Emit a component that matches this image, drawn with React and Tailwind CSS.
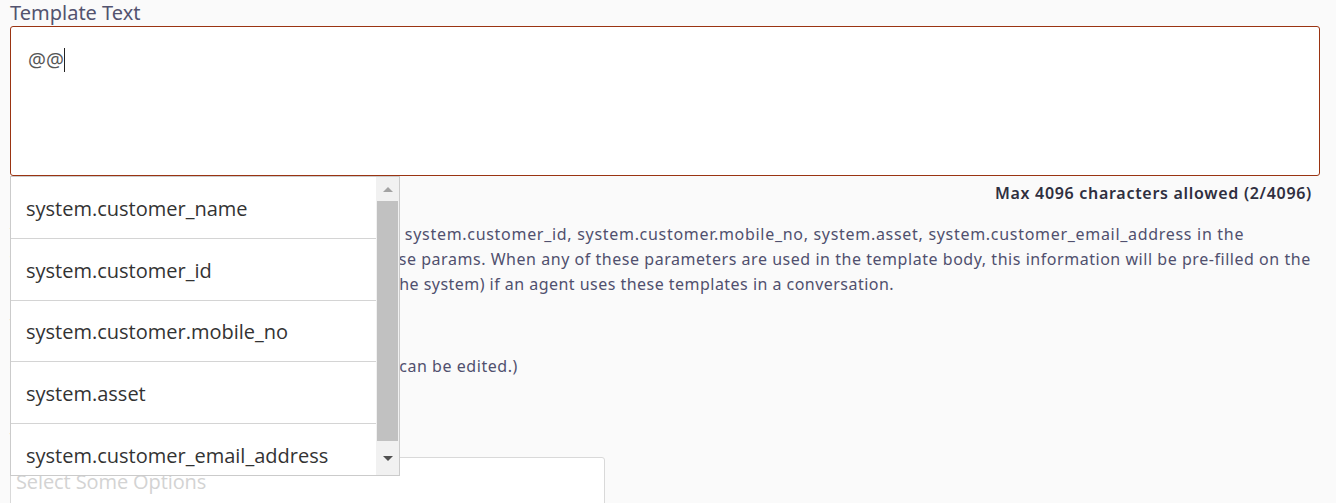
import React from 'react';

const options = [
  'system.customer_name',
  'system.customer_id',
  'system.customer.mobile_no',
  'system.asset',
  'system.customer_email_address',
];

function Dropdown() {
  return (
    <div className="absolute left-0 top-0 w-[390px] h-[300px] bg-white border border-[#cbcbcb] flex overflow-hidden">
      <ul className="flex-1 min-w-0">
        {options.map((opt) => (
          <li
            key={opt}
            className="h-[61.75px] flex items-center pl-[15px] pt-[3px] border-b border-[#d4d4d4] text-[20px] text-[#333] font-['Open_Sans',sans-serif] whitespace-nowrap"
          >
            {opt}
          </li>
        ))}
      </ul>
      {/* fake scrollbar */}
      <div className="w-[23px] shrink-0 bg-[#f1f1f1] flex flex-col items-center">
        <div className="h-[24px] w-full flex items-center justify-center">
          <div className="w-0 h-0 border-l-[5px] border-r-[5px] border-b-[5px] border-l-transparent border-r-transparent border-b-[#a3a3a3]" />
        </div>
        <div className="w-[21px] h-[240px] bg-[#c1c1c1]" />
        <div className="flex-1 w-full flex items-center justify-center">
          <div className="w-0 h-0 border-l-[5px] border-r-[5px] border-t-[5px] border-l-transparent border-r-transparent border-t-[#505050]" />
        </div>
      </div>
    </div>
  );
}

export default function App() {
  return (
    <div className="min-h-[503px] bg-[#fafafa] pl-[10px] pr-[16px] font-['Noto_Sans',sans-serif] overflow-hidden">
      <label className="block text-[20px] leading-[26px] text-[#53536f]">Template Text</label>
      <div className="h-[150px] bg-white border border-[#9a3412] rounded-[3px] pl-[17px] pt-[21px]">
        <span className="text-[20px] leading-[24px] text-[#555] font-['Open_Sans',sans-serif]">@@</span>
        <span className="inline-block w-px h-[24px] bg-[#222] align-[-5px]" />
      </div>

      <div className="relative">
        <div className="flex justify-end pr-[8px] pt-[6px]">
          <span className="text-[16px] leading-[22px] font-semibold tracking-[0.7px] text-[#2f2f3f]">
            Max 4096 characters allowed (2/4096)
          </span>
        </div>

        <p className="mt-[18px] text-[16px] leading-[25px] text-[#50506e] whitespace-nowrap">
          <span className="tracking-[0.7px]">
            <span className="tracking-[0.5px]">You can use parameters system.customer_name</span>, system.customer_id, system.customer.mobile_no, system.asset, system.customer_email_address in the
          </span>
          <br />
          <span className="tracking-[0.54px]">
            <span className="tracking-[0.29px]">template body. Your agents will be able to use the</span>se params. When any of these parameters are used in the template body, this information will be pre-filled on the
          </span>
          <br />
          <span className="tracking-[0.47px]">
            <span className="tracking-[0.41px]">screen with the customer details (as available in t</span>he system) if an agent uses these templates in a conversation.
          </span>
        </p>

        <div className="mt-[16px] text-[16px] leading-[24px] tracking-[0.65px] text-[#50506e]">Template Label</div>
        <p className="mt-[17px] text-[16px] leading-[25px] tracking-[0.55px] text-[#50506e] whitespace-nowrap">
          (After approval, only the message text and label can be edited.)
        </p>

        <div className="mt-[48px] text-[16px] leading-[24px] tracking-[0.65px] text-[#50506e]">Tags</div>
        <div className="mt-[6px] w-[595px] h-[60px] bg-white border border-[#d9d9d9] rounded-tr-[3px] pl-[5px] pt-[11px]">
          <span className="text-[20px] leading-[26px] text-[#d3d3d3] font-['Open_Sans',sans-serif] tracking-[-0.1px]">
            Select Some Options
          </span>
        </div>

        <Dropdown />
      </div>
    </div>
  );
}
